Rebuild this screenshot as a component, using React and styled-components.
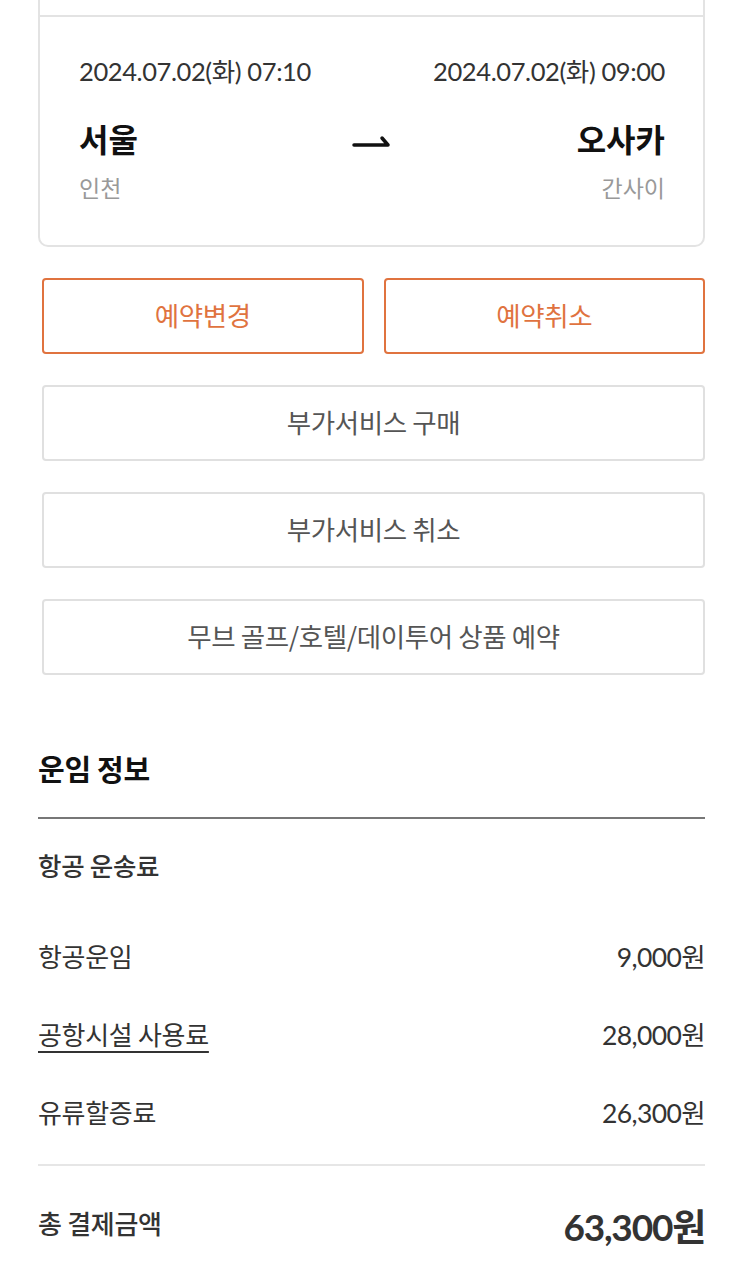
import React from 'react';
import styled, { createGlobalStyle } from 'styled-components';

const GlobalStyle = createGlobalStyle`
  html, body {
    margin: 0;
    padding: 0;
    background: #fff;
    font-family: 'Lato', 'Noto Sans CJK KR', sans-serif;
    overflow: hidden;
  }
`;

const Page = styled.div`
  width: 743px;
  height: 1283px;
  padding: 0 38px 0 38px;
  box-sizing: border-box;
  overflow: hidden;
`;

const Card = styled.div`
  margin-top: -20px;
  border: 2px solid #e3e3e3;
  border-radius: 10px;
  background: #fff;
`;

const CardTop = styled.div`
  height: 33px;
  border-bottom: 2px solid #e3e3e3;
`;

const Flight = styled.div`
  padding: 39px 38px 43px 39px;
`;

const Row = styled.div`
  display: flex;
  justify-content: space-between;
  align-items: center;
`;

const DateText = styled.div`
  font-size: 25.5px;
  color: #333;
  letter-spacing: -0.4px;
  line-height: 30px;
`;

const City = styled.div`
  font-family: 'Noto Sans CJK KR', sans-serif;
  font-size: 32px;
  font-weight: 700;
  color: #111;
  line-height: 40px;
`;

const Sub = styled.div`
  font-family: 'Noto Sans CJK KR', sans-serif;
  font-size: 23px;
  color: #999;
  line-height: 30px;
`;

const CityRow = styled(Row)`
  margin-top: 32px;
`;

const SubRow = styled(Row)`
  margin-top: 14px;
`;

const Arrow = styled.svg`
  width: 40px;
  height: 20px;
  margin-left: 30px;
  margin-top: 10px;
`;

const Actions = styled.div`
  display: flex;
  flex-direction: column;
  gap: 31px;
  padding-left: 4px;
  margin-top: 31px;
`;

const ButtonPair = styled.div`
  display: grid;
  grid-template-columns: 1fr 1fr;
  gap: 20px;
`;

const ActionButton = styled.button`
  height: 76px;
  width: 100%;
  background: #fff;
  border: 2px solid ${(p) => (p.$primary ? '#e0733f' : '#e0e0e0')};
  border-radius: 4px;
  color: ${(p) => (p.$primary ? '#e0733f' : '#555')};
  font-family: 'Noto Sans CJK KR', sans-serif;
  font-size: 26.5px;
  letter-spacing: -0.4px;
  padding: 0 0 4px;
  cursor: pointer;
`;

const Section = styled.div`
  margin-top: 73px;
`;

const SectionTitle = styled.h2`
  margin: 0;
  font-family: 'Noto Sans CJK KR', sans-serif;
  font-size: 29px;
  font-weight: 700;
  color: #111;
  line-height: 40px;
  letter-spacing: -0.3px;
  padding-bottom: 29px;
  border-bottom: 2px solid #777;
`;

const Group = styled.div`
  font-family: 'Noto Sans CJK KR', sans-serif;
  font-size: 25.5px;
  font-weight: 500;
  color: #333;
  line-height: 30px;
  padding: 31px 0 60px;
  letter-spacing: -0.3px;
`;

const FareRow = styled.div`
  display: flex;
  justify-content: space-between;
  align-items: center;
  height: 30px;
  margin-bottom: 48px;
`;

const FareLabel = styled.span`
  font-family: 'Noto Sans CJK KR', sans-serif;
  font-size: 26px;
  color: #333;
  letter-spacing: -0.3px;
  text-decoration: ${(p) => (p.$link ? 'underline' : 'none')};
  text-underline-offset: 6px;
  text-decoration-thickness: 2px;
`;

const Amount = styled.span`
  font-family: 'Lato', 'Noto Sans CJK KR', sans-serif;
  font-size: 26.5px;
  color: #333;
  letter-spacing: -0.6px;
`;

const Divider = styled.div`
  height: 2px;
  background: #e6e6e6;
  margin-top: -10px;
`;

const TotalRow = styled.div`
  display: flex;
  justify-content: space-between;
  align-items: center;
  margin-top: 32px;
`;

const TotalLabel = styled.span`
  font-family: 'Noto Sans CJK KR', sans-serif;
  font-size: 26px;
  font-weight: 500;
  color: #333;
  letter-spacing: -0.3px;
  margin-top: -6px;
`;

const TotalAmount = styled.span`
  font-family: 'Lato', 'Noto Sans CJK KR', sans-serif;
  font-size: 37px;
  font-weight: 700;
  color: #333;
  letter-spacing: -1.2px;
`;

const fares = [
  { label: '항공운임', amount: '9,000원' },
  { label: '공항시설 사용료', amount: '28,000원', link: true },
  { label: '유류할증료', amount: '26,300원' },
];

export default function App() {
  return (
    <>
      <GlobalStyle />
      <Page>
        <Card>
          <CardTop />
          <Flight>
            <Row>
              <DateText>2024.07.02(화) 07:10</DateText>
              <DateText>2024.07.02(화) 09:00</DateText>
            </Row>
            <CityRow>
              <City>서울</City>
              <Arrow viewBox="0 0 40 20">
                <path d="M2 12 H36 L30 5" fill="none" stroke="#111" strokeWidth="3.5" strokeLinecap="round" strokeLinejoin="round" />
              </Arrow>
              <City>오사카</City>
            </CityRow>
            <SubRow>
              <Sub>인천</Sub>
              <Sub>간사이</Sub>
            </SubRow>
          </Flight>
        </Card>

        <Actions>
          <ButtonPair>
            <ActionButton $primary>예약변경</ActionButton>
            <ActionButton $primary>예약취소</ActionButton>
          </ButtonPair>
          <ActionButton>부가서비스 구매</ActionButton>
          <ActionButton>부가서비스 취소</ActionButton>
          <ActionButton>무브 골프/호텔/데이투어 상품 예약</ActionButton>
        </Actions>

        <Section>
          <SectionTitle>운임 정보</SectionTitle>
          <Group>항공 운송료</Group>
          {fares.map((f) => (
            <FareRow key={f.label}>
              <FareLabel $link={f.link}>{f.label}</FareLabel>
              <Amount>{f.amount}</Amount>
            </FareRow>
          ))}
          <Divider />
          <TotalRow>
            <TotalLabel>총 결제금액</TotalLabel>
            <TotalAmount>63,300원</TotalAmount>
          </TotalRow>
        </Section>
      </Page>
    </>
  );
}
